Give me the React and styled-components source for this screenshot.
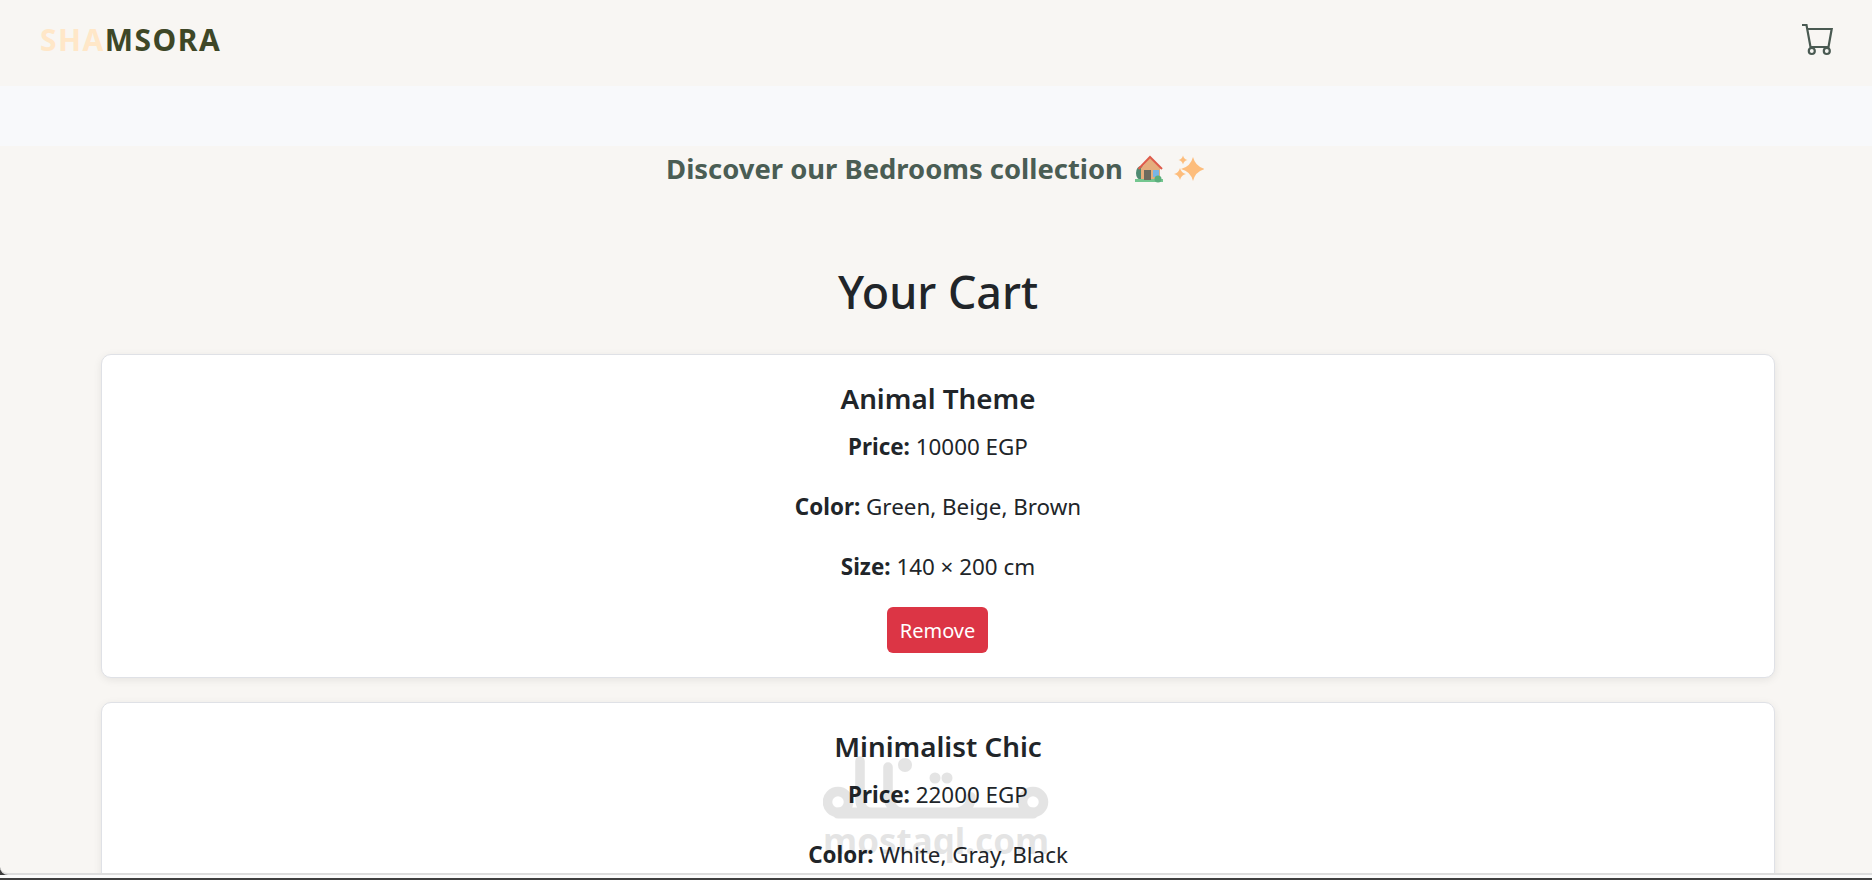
import React from "react";
import styled, { createGlobalStyle } from "styled-components";

const Global = createGlobalStyle`
  html, body { margin: 0; padding: 0; height: 100%; overflow: hidden; }
  body { font-family: "Noto Sans", "Open Sans", Arial, sans-serif; background: #3c3c3c; color: #212529; }
  * { box-sizing: border-box; }
`;

const Shell = styled.div`
  height: 880px;
  display: flex;
  flex-direction: column;
`;
const Viewport = styled.div`
  position: relative;
  height: 875px;
  flex: none;
  overflow: hidden;
  background: #f8f6f3;
  border-bottom: 2px solid #dddddd;
  border-bottom-left-radius: 8px;
`;
const WindowEdge = styled.div`
  flex: 1;
  background: #fbfbfb;
  border-bottom: 2px solid #3f3f3f;
`;
const Navbar = styled.header`
  height: 86px;
  padding: 0 40px 7px;
  display: flex;
  align-items: center;
  justify-content: space-between;
`;
const Logo = styled.div`
  font-size: 30px;
  font-weight: 700;
  letter-spacing: 1.5px;
  color: #3e4727;
  line-height: 1;
`;
const LogoAccent = styled.span`
  color: #ffe7c8;
`;
const CartGlyph = styled.svg`
  display: block;
  margin-right: -2px;
  color: #4a5a52;
`;
const Band = styled.div`
  height: 60px;
  background: #f8f9fb;
`;
const Tagline = styled.h2`
  margin: 0;
  height: 46px;
  display: flex;
  align-items: center;
  justify-content: center;
  gap: 12px;
  font-size: 27.4px;
  line-height: 46px;
  font-weight: 700;
  color: #4a5d54;
  padding-right: 2px;
`;
const EmojiRow = styled.span`
  display: flex;
  gap: 9px;
  align-items: center;
`;
const Main = styled.main`
  padding: 70px 97px 0 101px;
`;
const Title = styled.h1`
  margin: 0 0 32px;
  text-align: center;
  font-size: 44.8px;
  line-height: 60px;
  font-weight: 550;
  color: #212529;
`;
const CartList = styled.div`
  display: flex;
  flex-direction: column;
  gap: 24px;
`;
const Card = styled.article`
  background: #fff;
  border: 1px solid #dfe1e6;
  border-radius: 10px;
  box-shadow: 0 2px 8px rgba(0, 0, 0, 0.08);
  padding: 25px 20px 24px;
  text-align: center;
`;
const ItemName = styled.h3`
  margin: 0 0 16px;
  font-size: 27.8px;
  line-height: 36px;
  font-weight: 600;
  color: #212529;
`;
const Detail = styled.p`
  margin: 0 0 30px;
  font-size: 22.4px;
  line-height: 30px;
  color: #212529;
  &:nth-of-type(3) { margin-bottom: 25px; }
  b { font-weight: 700; }
`;
const RemoveButton = styled.button`
  display: inline-block;
  height: 46px;
  width: 101px;
  margin-right: 1px;
  padding: 0;
  border: 0;
  border-radius: 6px;
  background: #dc3545;
  color: #fff;
  font-family: inherit;
  font-size: 20px;
  vertical-align: top;
`;
const Watermark = styled.div`
  position: absolute;
  left: 823px;
  top: 755px;
  width: 226px;
  color: #000;
  opacity: 0.1;
  pointer-events: none;
`;
const WatermarkMark = styled.svg`
  display: block;
`;
const WatermarkText = styled.div`
  font-family: "Noto Sans", sans-serif;
  font-weight: 700;
  font-size: 35px;
  line-height: 36px;
  text-align: center;
  white-space: nowrap;
`;

const items = [
  { name: "Animal Theme", price: "10000 EGP", color: "Green, Beige, Brown", size: "140 × 200 cm" },
  { name: "Minimalist Chic", price: "22000 EGP", color: "White, Gray, Black", size: "160 × 200 cm" },
];

function CartIcon() {
  return (
    <CartGlyph width="34" height="34" viewBox="0 0 34 34" fill="none" stroke="currentColor" strokeWidth="2.200">
      <path d="M2 2h4.500l4 22h18l3.200-18H7.200" />
      <circle cx="11.800" cy="28" r="3" />
      <circle cx="26.800" cy="28" r="3" />
    </CartGlyph>
  );
}

function HouseEmoji() {
  return (
    <svg width="30" height="28" viewBox="0 0 30 28">
      <ellipse cx="6" cy="18" rx="5" ry="7" fill="#4f8a72" />
      <rect x="0" y="24" width="28" height="3" fill="#74c68f" />
      <path d="M6 13 15 3l10 10v11H6z" fill="#e5ad7d" />
      <path d="M3.500 14 15 2l12 12" fill="none" stroke="#de5b4a" strokeWidth="2" />
      <rect x="9" y="15" width="7" height="10" fill="#6c6a5e" />
      <rect x="18" y="15" width="6" height="7" fill="#79b5e6" />
      <circle cx="23" cy="24" r="3.500" fill="#5bae7c" />
    </svg>
  );
}

function SparkleEmoji() {
  const star = (x, y, r) =>
    `M${x} ${y - r}Q${x + r * 0.2} ${y - r * 0.2} ${x + r} ${y}Q${x + r * 0.2} ${y + r * 0.2} ${x} ${y + r}Q${x - r * 0.2} ${y + r * 0.2} ${x - r} ${y}Q${x - r * 0.2} ${y - r * 0.2} ${x} ${y - r}Z`;
  return (
    <svg width="30" height="30" viewBox="0 0 30 30" fill="#fdbd7c">
      <path d={star(19, 15, 12)} />
      <path d={star(9, 6, 4.5)} />
      <path d={star(6, 20, 6)} />
    </svg>
  );
}

function WatermarkLogo() {
  return (
    <WatermarkMark width="226" height="68" viewBox="0 0 226 68" fill="none" stroke="currentColor" strokeWidth="9.500" strokeLinecap="round">
      <circle cx="15" cy="47" r="10.500" />
      <circle cx="210" cy="47" r="10.500" />
      <path d="M15 58H210" strokeWidth="11" />
      <path d="M37 6V44c0 8 5 14 14 14" />
      <path d="M65 12V40c0 10 8 18 16 18" />
      <path d="M130 58c10 0 18-6 18-16" />
      <circle cx="82" cy="10" r="7" fill="currentColor" stroke="none" />
      <circle cx="112" cy="23" r="5.500" fill="currentColor" stroke="none" />
      <circle cx="124" cy="23" r="5.500" fill="currentColor" stroke="none" />
    </WatermarkMark>
  );
}

export default function App() {
  return (
    <Shell>
      <Global />
      <Viewport>
        <Navbar>
          <Logo>
            <LogoAccent>SHA</LogoAccent>MSORA
          </Logo>
          <CartIcon />
        </Navbar>
        <Band />
        <Tagline>
          <span>Discover our Bedrooms collection</span>
          <EmojiRow>
            <HouseEmoji />
            <SparkleEmoji />
          </EmojiRow>
        </Tagline>
        <Main>
          <Title>Your Cart</Title>
          <CartList>
            {items.map((item) => (
              <Card key={item.name}>
                <ItemName>{item.name}</ItemName>
                <Detail><b>Price:</b> {item.price}</Detail>
                <Detail><b>Color:</b> {item.color}</Detail>
                <Detail><b>Size:</b> {item.size}</Detail>
                <RemoveButton>Remove</RemoveButton>
              </Card>
            ))}
          </CartList>
        </Main>
        <Watermark>
          <WatermarkLogo />
          <WatermarkText>mostaql.com</WatermarkText>
        </Watermark>
      </Viewport>
      <WindowEdge />
    </Shell>
  );
}
